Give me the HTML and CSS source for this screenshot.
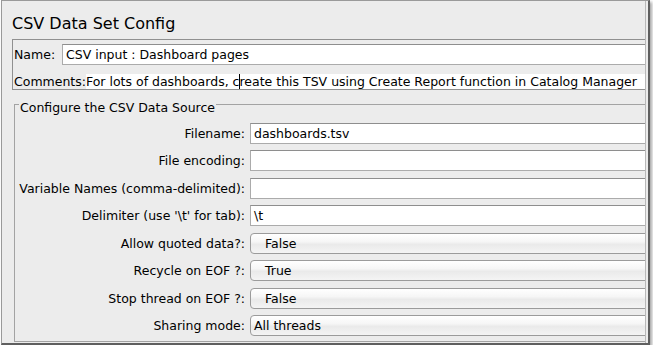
FILE: index.html
```html
<!DOCTYPE html>
<html>
<head>
  <meta charset="utf-8">
  <title>CSV Data Set Config</title>
  <link rel="stylesheet" href="styles.css">
</head>
<body>

  <div class="frame">
    <div class="panel">
      <h1 class="title">CSV Data Set Config</h1>

      <div class="name-box">
        <div class="name-row">
          <span class="name-label">Name:</span>
          <div class="field">CSV input : Dashboard pages</div>
        </div>
        <div class="comment-row">
          <span class="comment-label">Comments:</span>
          <div class="comment-text">For lots of dashboards, c<span class="caret"></span>reate this TSV using Create Report function in Catalog Manager</div>
        </div>
      </div>

      <div class="source">
        <span class="legend">Configure the CSV Data Source</span>
        <div class="rows">
          <span class="label">Filename:</span>
          <div class="field">dashboards.tsv</div>

          <span class="label">File encoding:</span>
          <div class="field"></div>

          <span class="label">Variable Names (comma-delimited):</span>
          <div class="field"></div>

          <span class="label">Delimiter (use '\t' for tab):</span>
          <div class="field">\t</div>

          <span class="label">Allow quoted data?:</span>
          <div class="combo">False</div>

          <span class="label">Recycle on EOF ?:</span>
          <div class="combo">True</div>

          <span class="label">Stop thread on EOF ?:</span>
          <div class="combo">False</div>

          <span class="label">Sharing mode:</span>
          <div class="combo editable">All threads</div>
        </div>
      </div>
    </div>
  </div>

</body>
</html>
```

FILE: styles.css
```css
body {
  margin: 0;
  background: #fff;
  font-family: "DejaVu Sans", sans-serif;
  font-size: 12.5px;
  color: #000;
}

.frame {
  display: flex;
  width: 649px;
  height: 345px;
  box-sizing: border-box;
  margin-left: 1px;
  background: #ececec;
  border: 1px solid #9a9a9a;
  border-right: 2px solid #5f5f5f;
  border-bottom: 2px solid #5f5f5f;
  box-shadow: 2px 2px 3px rgba(0,0,0,0.35);
}

/* the window is cut off on the right, so everything inside runs past it */
.panel {
  width: 644px;
  box-sizing: border-box;
  padding-left: 10px;
  border-right: 1px solid #b9b9b9;
  overflow: hidden;
}

.title {
  margin: 0;
  padding-top: 13px;
  font-size: 16px;
  font-weight: normal;
  line-height: 20px;
  white-space: nowrap;
}

.name-box {
  margin: 5px -20px 0 0;
  padding: 4px 0 0 1px;
  border: 1px solid #909090;
  border-bottom: 0;
  box-shadow: inset 0 -1px 0 #909090;
}

.name-row {
  display: flex;
  height: 21px;
}

.name-label {
  width: 48px;
  line-height: 21px;
}

.comment-row {
  display: flex;
  margin-top: 9px;
  height: 16px;
}

.comment-label {
  line-height: 15px;
}

.comment-text {
  flex: 1;
  height: 15px;
  background: #fff;
  line-height: 15px;
  white-space: nowrap;
}

.caret {
  display: inline-block;
  width: 0;
  height: 15px;
  margin-right: -1px;
  border-left: 1px solid #000;
  vertical-align: top;
}

.source {
  position: relative;
  margin: 14px -20px 0 2px;
  padding: 18px 0 5px 0;
  border: 1px solid #a3a3a3;
}

.legend {
  position: absolute;
  top: -5px;
  left: 4px;
  padding: 0 1px;
  background: #ececec;
  line-height: 15px;
  white-space: nowrap;
}

.rows {
  display: grid;
  grid-template-columns: 230px 1fr;
  grid-auto-rows: 21px;
  column-gap: 5px;
  row-gap: 6.43px;
}

.label {
  text-align: right;
  line-height: 21px;
  white-space: nowrap;
}

.field {
  flex: 1;
  height: 21px;
  box-sizing: border-box;
  padding-left: 3px;
  background: #fff;
  border: 1px solid #ababab;
  border-top-color: #8e8e8e;
  line-height: 19px;
  white-space: nowrap;
  overflow: hidden;
}

.combo {
  height: 21px;
  box-sizing: border-box;
  padding-left: 14px;
  border: 1px solid #9b9b9b;
  border-radius: 4px;
  background: linear-gradient(to bottom, #ffffff 0%, #f6f6f6 40%, #eaeaea 55%, #f4f4f4 100%);
  line-height: 19px;
  white-space: nowrap;
}

.combo.editable {
  padding-left: 3px;
}
```
